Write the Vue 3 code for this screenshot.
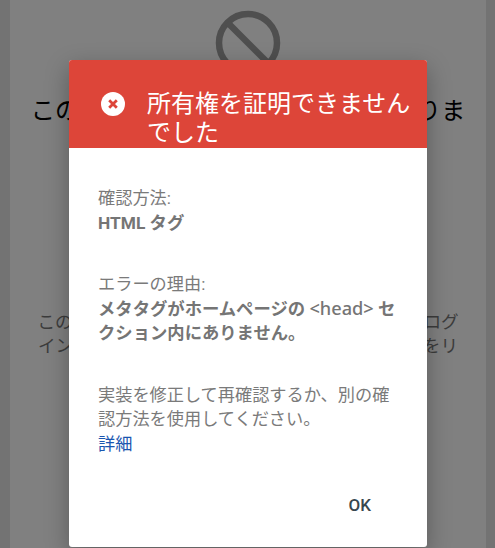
<script setup>
</script>

<template>
  <div class="page">
    <main class="card">
      <svg class="ban" viewBox="0 0 66 66" aria-hidden="true">
        <circle cx="33" cy="33" r="29" fill="none" stroke="#4f4f4f" stroke-width="6.5" />
        <path d="M12.5 12.5 L53.5 53.5" stroke="#4f4f4f" stroke-width="6.5" />
      </svg>
      <h1 class="heading">このプロパティへのアクセス権がありません</h1>
      <p class="lead">このプロパティを確認するには別のアカウントでログインし直すか、プロパティの所有者にアクセス権をリクエストしてください。</p>
    </main>

    <section class="dialog">
      <header class="dialog-head">
        <svg class="err" viewBox="0 0 24 24" aria-hidden="true">
          <circle cx="12" cy="12" r="12" fill="#fff" />
          <path d="M8.2 8.2 L15.8 15.8 M15.8 8.2 L8.2 15.8" stroke="#dd4539" stroke-width="2.8" />
        </svg>
        <h2 class="title">所有権を証明できませんでした</h2>
      </header>
      <div class="dialog-body">
        <p class="block">確認方法:<br /><b>HTML タグ</b></p>
        <p class="block">エラーの理由:<br /><b>メタタグがホームページの <span class="code">&lt;head&gt;</span> セクション内にありません。</b></p>
        <p class="block">実装を修正して再確認するか、別の確認方法を使用してください。<br /><a class="link">詳細</a></p>
      </div>
      <footer class="dialog-foot"><span class="ok">OK</span></footer>
    </section>
  </div>
</template>

<style scoped>
.page {
  position: relative;
  width: 495px;
  height: 548px;
  overflow: hidden;
  background: #737373;
  padding: 0 9px 0 10px;
  box-sizing: border-box;
  font-family: Roboto, "Noto Sans CJK JP", "Noto Sans", sans-serif;
}
.card {
  height: 100%;
  background: #808080;
  padding-top: 10px;
  box-sizing: border-box;
  display: flex;
  flex-direction: column;
  align-items: center;
}
.ban {
  width: 66px;
  height: 66px;
  flex: none;
}
.heading {
  margin: 19px 0 0;
  width: 440px;
  font-size: 24.3px;
  line-height: 32px;
  font-weight: 400;
  color: #000;
  text-align: center;
}
.lead {
  margin: 151px 0 0;
  width: 426px;
  font-size: 17.6px;
  line-height: 24px;
  color: #3c3c3c;
  text-align: center;
}
.dialog {
  position: absolute;
  left: 69px;
  top: 60px;
  width: 358px;
  height: 487px;
  background: #fff;
  border-radius: 3px;
  overflow: hidden;
  box-shadow: 0 8px 24px rgba(0, 0, 0, 0.3);
  display: flex;
  flex-direction: column;
}
.dialog-head {
  height: 88px;
  background: #dd4539;
  display: flex;
  align-items: flex-start;
  box-sizing: border-box;
  padding: 30px 12px 0 32px;
  flex: none;
}
.err {
  width: 24px;
  height: 24px;
  flex: none;
  margin-top: 2px;
}
.title {
  margin: 0 0 0 22px;
  font-size: 24px;
  line-height: 29px;
  font-weight: 400;
  color: #fff;
}
.dialog-body {
  padding: 38px 29px 0 30px;
  margin-left: -1px;
  flex: 1;
}
.block {
  margin: 0 0 37px;
  font-size: 17.2px;
  line-height: 24.5px;
  color: #7a7a7a;
}
.block b {
  font-size: 17.33px;
  font-weight: 700;
  color: #757575;
}
.code {
  font-family: "Noto Sans", sans-serif;
  font-size: 18.2px;
  line-height: 20px;
  font-weight: 500;
}
.link {
  color: #1a56b0;
}
.dialog-foot {
  display: flex;
  justify-content: flex-end;
  padding: 0 56px 32px 0;
}
.ok {
  font-size: 17px;
  line-height: 24px;
  font-weight: 500;
  color: #37474f;
}
</style>
